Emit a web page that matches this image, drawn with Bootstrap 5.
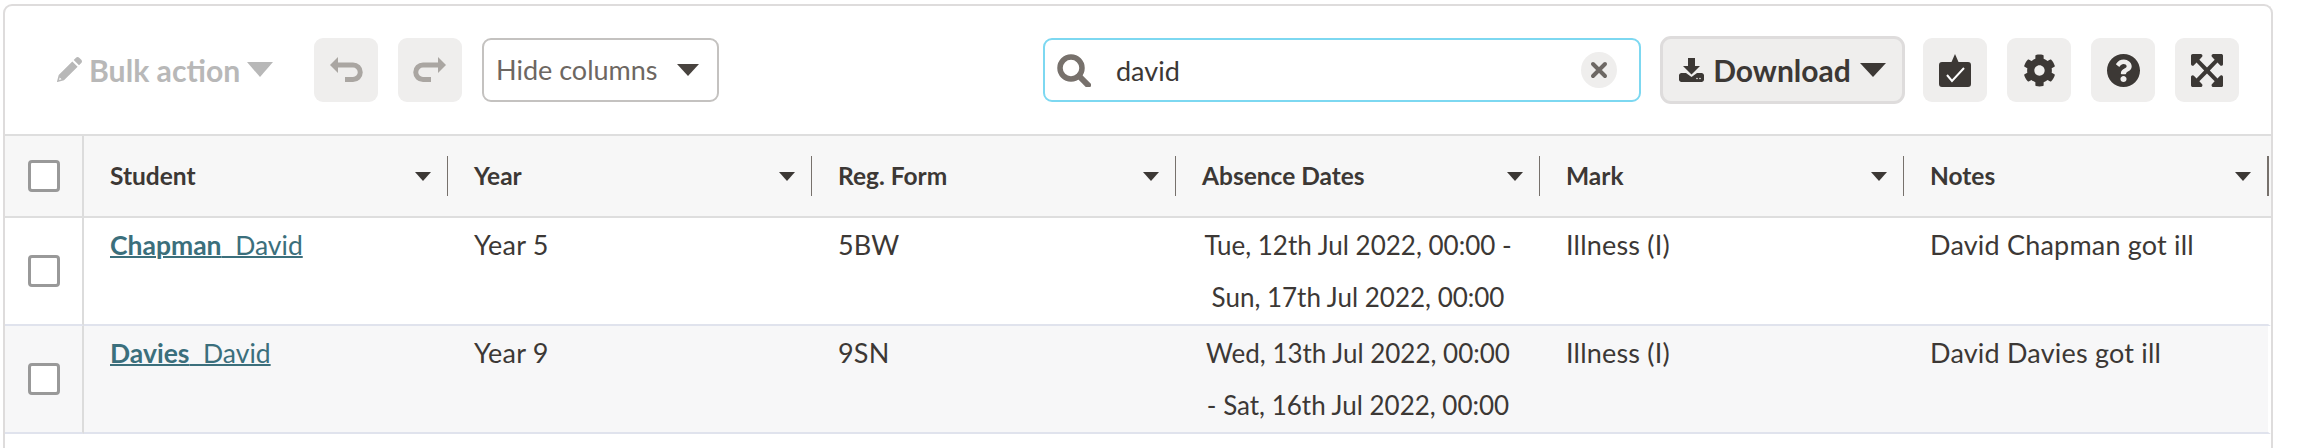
<!DOCTYPE html>
<html lang="en">
<head>
<meta charset="utf-8">
<title>Absences</title>
<link href="https://cdn.jsdelivr.net/npm/bootstrap@5.3.0/dist/css/bootstrap.min.css" rel="stylesheet">
<style>
html,body{height:448px;overflow:hidden;background:#fff}
body{font-family:"Lato","Noto Sans",sans-serif;color:#3c3835;font-size:25px}
.shell{margin:4px 27px 0 3px;height:444px;border:2px solid #dedcdc;border-bottom:0;border-radius:9px 9px 0 0;overflow:hidden;background:#fff}
.bar{height:130px;flex:none;padding-left:52px;padding-right:32px;border-bottom:2px solid #dedede}
.tri{display:inline-block;width:0;height:0;border-style:solid;border-color:transparent;border-bottom-width:0}
.bulk{width:220px;margin-right:37px;font-size:30.2px;font-weight:700;color:#b8b8b8;gap:7px;line-height:1}
.bulk .tri{border-width:15px 13px 0;border-top-color:#b8b8b8}
.sq{width:64px;height:64px;border-radius:9px;background:#efeeed;padding:0;border:0;flex:none}
.sq.dim{margin-right:20px}
.hidecols{width:237px;height:64px;border:2px solid #c4c2c0;border-radius:9px;background:#fff;color:#6d6762;font-size:27px;padding:0 18px 0 12px}
.hidecols .tri{border-width:12px 11px 0;border-top-color:#48433f}
.find{width:598px;height:64px;border:2px solid #7dd8f1;border-radius:9px;margin-left:auto;padding:0 22px 0 12px;gap:25px;flex:none}
.find input{border:0;outline:0;padding:0;flex:1;min-width:0;font-size:27px;color:#3c3835;background:transparent;box-shadow:none;border-radius:0;line-height:1}
.clearx{width:36px;height:36px;border-radius:50%;background:#efeeed;border:0;padding:0;flex:none}
.dl{width:245px;height:68px;margin-left:19px;margin-right:18px;border:3px solid #dedcdc;border-radius:11px;background:#efeeed;color:#3c3835;font-size:30px;font-weight:700;gap:9px;padding:0;flex:none}
.dl .tri{border-width:14px 13px 0;border-top-color:#3c3835}
.tools{gap:20px}
.grid{width:100%;table-layout:fixed;border-collapse:separate;border-spacing:0;margin:0;color:#3c3835;font-size:27px}
.grid th,.grid td{padding:0;box-shadow:none;background:transparent}
.grid thead th{height:82px;background:#f7f7f7;border-bottom:2px solid #dedede;font-size:24.5px;font-weight:700;vertical-align:middle}
.grid tbody td{height:108px;vertical-align:top;border-bottom:2px solid #e0e3ed;line-height:52px;padding:1px 26px 1px;color:#3c3835;letter-spacing:.2px}
.grid tbody tr:nth-child(2) td{background:#f7f7f8}
.grid tbody td:last-child{border-right:3px solid #fff}
.grid .chk{width:79px;border-right:2px solid #dcdcdc;padding:0;vertical-align:middle;text-align:center;line-height:1}
.grid tbody .chk{padding:0;vertical-align:middle}
.grid .cwide{width:364px}
.box{display:block;width:32px;height:32px;border:3px solid #999;border-radius:4px;background:#fff;margin:0 0 0 23px}
.hdcell{height:40px;margin-left:26px;margin-right:-1px;padding-right:16px;border-right:2px solid #77716c}
.hdcell .tri{border-width:9px 8px 0;border-top-color:#3c3835}
.hdcell.endcell{margin-right:2px}
.grid tbody a{color:#3b6f7c;text-decoration:underline;text-decoration-thickness:2px;font-size:26.5px;letter-spacing:0}
.grid tbody a b{font-weight:700}
.grid tbody td.dates{text-align:center;font-size:26px;letter-spacing:0}
.grid .cend{width:auto}
</style>
</head>
<body>
<div class="card shell">
  <div class="bar d-flex align-items-center">
    <div class="bulk d-flex align-items-center">
      <svg width="25" height="25" viewBox="0 0 25 25" fill="#b8b8b8"><path d="M19 .7c.9-.9 2.300-.9 3.200 0l2.100 2.100c.9.900.900 2.300 0 3.200L22 8.300 16.700 3zM15.300 4.400l5.300 5.300L7 23.300.5 25c-.3.100-.6-.200-.5-.5L1.700 18zM2.700 20.400l-.6 2.500 2.500-.6z"/></svg>
      <span>Bulk action</span><span class="tri"></span>
    </div>
    <button class="sq dim d-flex align-items-center justify-content-center" aria-label="Undo">
      <svg width="64" height="64" viewBox="0 0 64 64"><path d="M22 27H39a7.250 7.250 0 0 1 0 14.500H31" fill="none" stroke="#aaa6a2" stroke-width="5"/><path d="M16 27l8-8v16z" fill="#aaa6a2"/></svg>
    </button>
    <button class="sq dim d-flex align-items-center justify-content-center" aria-label="Redo">
      <svg width="64" height="64" viewBox="0 0 64 64"><g transform="translate(64 0) scale(-1 1)"><path d="M22 27H39a7.250 7.250 0 0 1 0 14.500H31" fill="none" stroke="#aaa6a2" stroke-width="5"/><path d="M16 27l8-8v16z" fill="#aaa6a2"/></g></svg>
    </button>
    <button class="hidecols d-flex align-items-center justify-content-between"><span>Hide columns</span><span class="tri"></span></button>
    <div class="find d-flex align-items-center">
      <svg width="34" height="33" viewBox="0 0 34 33" class="flex-shrink-0"><circle cx="14" cy="14" r="11" fill="none" stroke="#77716c" stroke-width="5.500"/><path d="M22 22l9 9" stroke="#77716c" stroke-width="6" stroke-linecap="round"/></svg>
      <input class="form-control" type="text" value="david" aria-label="Search">
      <button class="clearx d-flex align-items-center justify-content-center" aria-label="Clear"><svg width="18" height="18" viewBox="0 0 18 18"><path d="M3 3l12 12M15 3L3 15" stroke="#6d6864" stroke-width="4" stroke-linecap="round"/></svg></button>
    </div>
    <button class="dl d-flex align-items-center justify-content-center">
      <svg width="25" height="24" viewBox="0 0 25 24" fill="#3c3835"><path d="M9 0h7v8h5l-8.500 8.500L4 8h5zM0 17.500C0 16.100 1.100 15 2.500 15H7l5.500 4 5.500-4h4.500c1.400 0 2.500 1.100 2.500 2.500v4c0 1.400-1.100 2.500-2.500 2.500h-20C1.100 24 0 22.900 0 21.500z"/><circle cx="18" cy="20.500" r=".8" fill="#efeeed"/><circle cx="21" cy="20.500" r=".8" fill="#efeeed"/></svg>
      <span>Download</span><span class="tri"></span>
    </button>
    <div class="tools d-flex">
      <button class="sq d-flex align-items-center justify-content-center" aria-label="Tasks"><svg width="32" height="33" viewBox="0 0 32 33"><path d="M3 8h9.500L16 0l3.500 8H29a3 3 0 0 1 3 3v19a3 3 0 0 1-3 3H3a3 3 0 0 1-3-3V11a3 3 0 0 1 3-3z" fill="#3c3835"/><path d="M8 21l5 6L25 14" fill="none" stroke="#fff" stroke-width="2"/></svg></button>
      <button class="sq d-flex align-items-center justify-content-center" aria-label="Settings"><svg width="33" height="33" viewBox="0 0 512 512" fill="#3c3835"><path d="M487.4 315.700l-42.600-24.600c4.300-23.200 4.300-47 0-70.200l42.600-24.600c4.900-2.800 7.100-8.600 5.500-14-11.100-35.600-30-67.800-54.700-94.600-3.800-4.100-10-5.100-14.800-2.300L380.800 110c-17.900-15.400-38.500-27.300-60.800-35.100V25.800c0-5.600-3.900-10.500-9.400-11.700-36.700-8.200-74.300-7.800-109.200 0-5.500 1.200-9.400 6.100-9.400 11.700V75c-22.200 7.900-42.800 19.800-60.800 35.100L88.700 85.500c-4.900-2.800-11-1.900-14.800 2.300-24.700 26.700-43.600 58.900-54.700 94.600-1.700 5.400.6 11.200 5.500 14L67.300 221c-4.300 23.200-4.300 47 0 70.200l-42.600 24.600c-4.900 2.800-7.100 8.600-5.500 14 11.100 35.600 30 67.800 54.700 94.600 3.800 4.100 10 5.100 14.800 2.300l42.600-24.600c17.900 15.400 38.500 27.300 60.800 35.100v49.200c0 5.600 3.900 10.500 9.400 11.700 36.700 8.200 74.300 7.800 109.200 0 5.500-1.200 9.400-6.100 9.400-11.700v-49.200c22.200-7.900 42.800-19.800 60.800-35.100l42.600 24.600c4.900 2.800 11 1.900 14.800-2.300 24.700-26.700 43.600-58.900 54.700-94.600 1.500-5.500-.7-11.300-5.600-14.100zM256 336c-44.100 0-80-35.900-80-80s35.900-80 80-80 80 35.900 80 80-35.900 80-80 80z"/></svg></button>
      <button class="sq d-flex align-items-center justify-content-center" aria-label="Help"><svg width="33" height="33" viewBox="8 8 496 496" fill="#3c3835"><path d="M504 256c0 136.997-111.043 248-248 248S8 392.997 8 256C8 119.083 119.043 8 256 8s248 111.083 248 248zM262.655 90c-54.497 0-89.255 22.957-116.549 63.758-3.536 5.286-2.353 12.415 2.715 16.258l34.699 26.310c5.205 3.947 12.621 3.008 16.665-2.122 17.864-22.658 30.113-35.797 57.303-35.797 20.429 0 45.698 13.148 45.698 32.958 0 14.976-12.363 22.667-32.534 33.976C247.128 238.528 216 254.941 216 296v4c0 6.627 5.373 12 12 12h56c6.627 0 12-5.373 12-12v-1.333c0-28.462 83.186-29.647 83.186-106.667 0-58.002-60.165-102-116.531-102zM256 338c-25.365 0-46 20.635-46 46 0 25.364 20.635 46 46 46s46-20.636 46-46c0-25.365-20.635-46-46-46z"/></svg></button>
      <button class="sq d-flex align-items-center justify-content-center" aria-label="Fullscreen"><svg width="32" height="33" viewBox="0 32 448 448" preserveAspectRatio="none" fill="#3c3835"><path d="M448.100 344v112c0 13.300-10.700 24-24 24h-112c-21.400 0-32.100-25.900-17-41l36.200-36.200L224 295.600 116.800 402.900 153 439c15.100 15.100 4.400 41-17 41H24c-13.300 0-24-10.700-24-24V344c0-21.400 25.900-32.100 41-17l36.200 36.200L184.500 256 77.200 148.700 41 185c-15.100 15.100-41 4.400-41-17V56c0-13.300 10.700-24 24-24h112c21.400 0 32.100 25.900 17 41l-36.200 36.200L224 216.400l107.300-107.300L295.100 73c-15.100-15.100-4.400-41 17-41h112c13.300 0 24 10.700 24 24v112c0 21.400-25.900 32.100-41 17l-36.200-36.200L263.600 256l107.300 107.300 36.200-36.200c15.100-15.200 41-4.500 41 16.900z"/></svg></button>
    </div>
  </div>
  <table class="table grid">
    <thead>
      <tr>
        <th class="chk"><span class="box"></span></th>
        <th class="cwide"><div class="hdcell d-flex align-items-center justify-content-between"><span>Student</span><span class="tri"></span></div></th>
        <th class="cwide"><div class="hdcell d-flex align-items-center justify-content-between"><span>Year</span><span class="tri"></span></div></th>
        <th class="cwide"><div class="hdcell d-flex align-items-center justify-content-between"><span>Reg. Form</span><span class="tri"></span></div></th>
        <th class="cwide"><div class="hdcell d-flex align-items-center justify-content-between"><span>Absence Dates</span><span class="tri"></span></div></th>
        <th class="cwide"><div class="hdcell d-flex align-items-center justify-content-between"><span>Mark</span><span class="tri"></span></div></th>
        <th class="cend"><div class="hdcell endcell d-flex align-items-center justify-content-between"><span>Notes</span><span class="tri"></span></div></th>
      </tr>
    </thead>
    <tbody>
      <tr>
        <td class="chk"><span class="box"></span></td>
        <td><a href="#"><b>Chapman</b>&nbsp; David</a></td>
        <td>Year 5</td>
        <td>5BW</td>
        <td class="dates">Tue, 12th Jul 2022, 00:00 - Sun, 17th Jul 2022, 00:00</td>
        <td>Illness (I)</td>
        <td>David Chapman got ill</td>
      </tr>
      <tr>
        <td class="chk"><span class="box"></span></td>
        <td><a href="#"><b>Davies</b>&nbsp; David</a></td>
        <td>Year 9</td>
        <td>9SN</td>
        <td class="dates">Wed, 13th Jul 2022, 00:00 - Sat, 16th Jul 2022, 00:00</td>
        <td>Illness (I)</td>
        <td>David Davies got ill</td>
      </tr>
    </tbody>
  </table>
</div>
<script src="https://cdn.jsdelivr.net/npm/bootstrap@5.3.0/dist/js/bootstrap.bundle.min.js"></script>
</body>
</html>
